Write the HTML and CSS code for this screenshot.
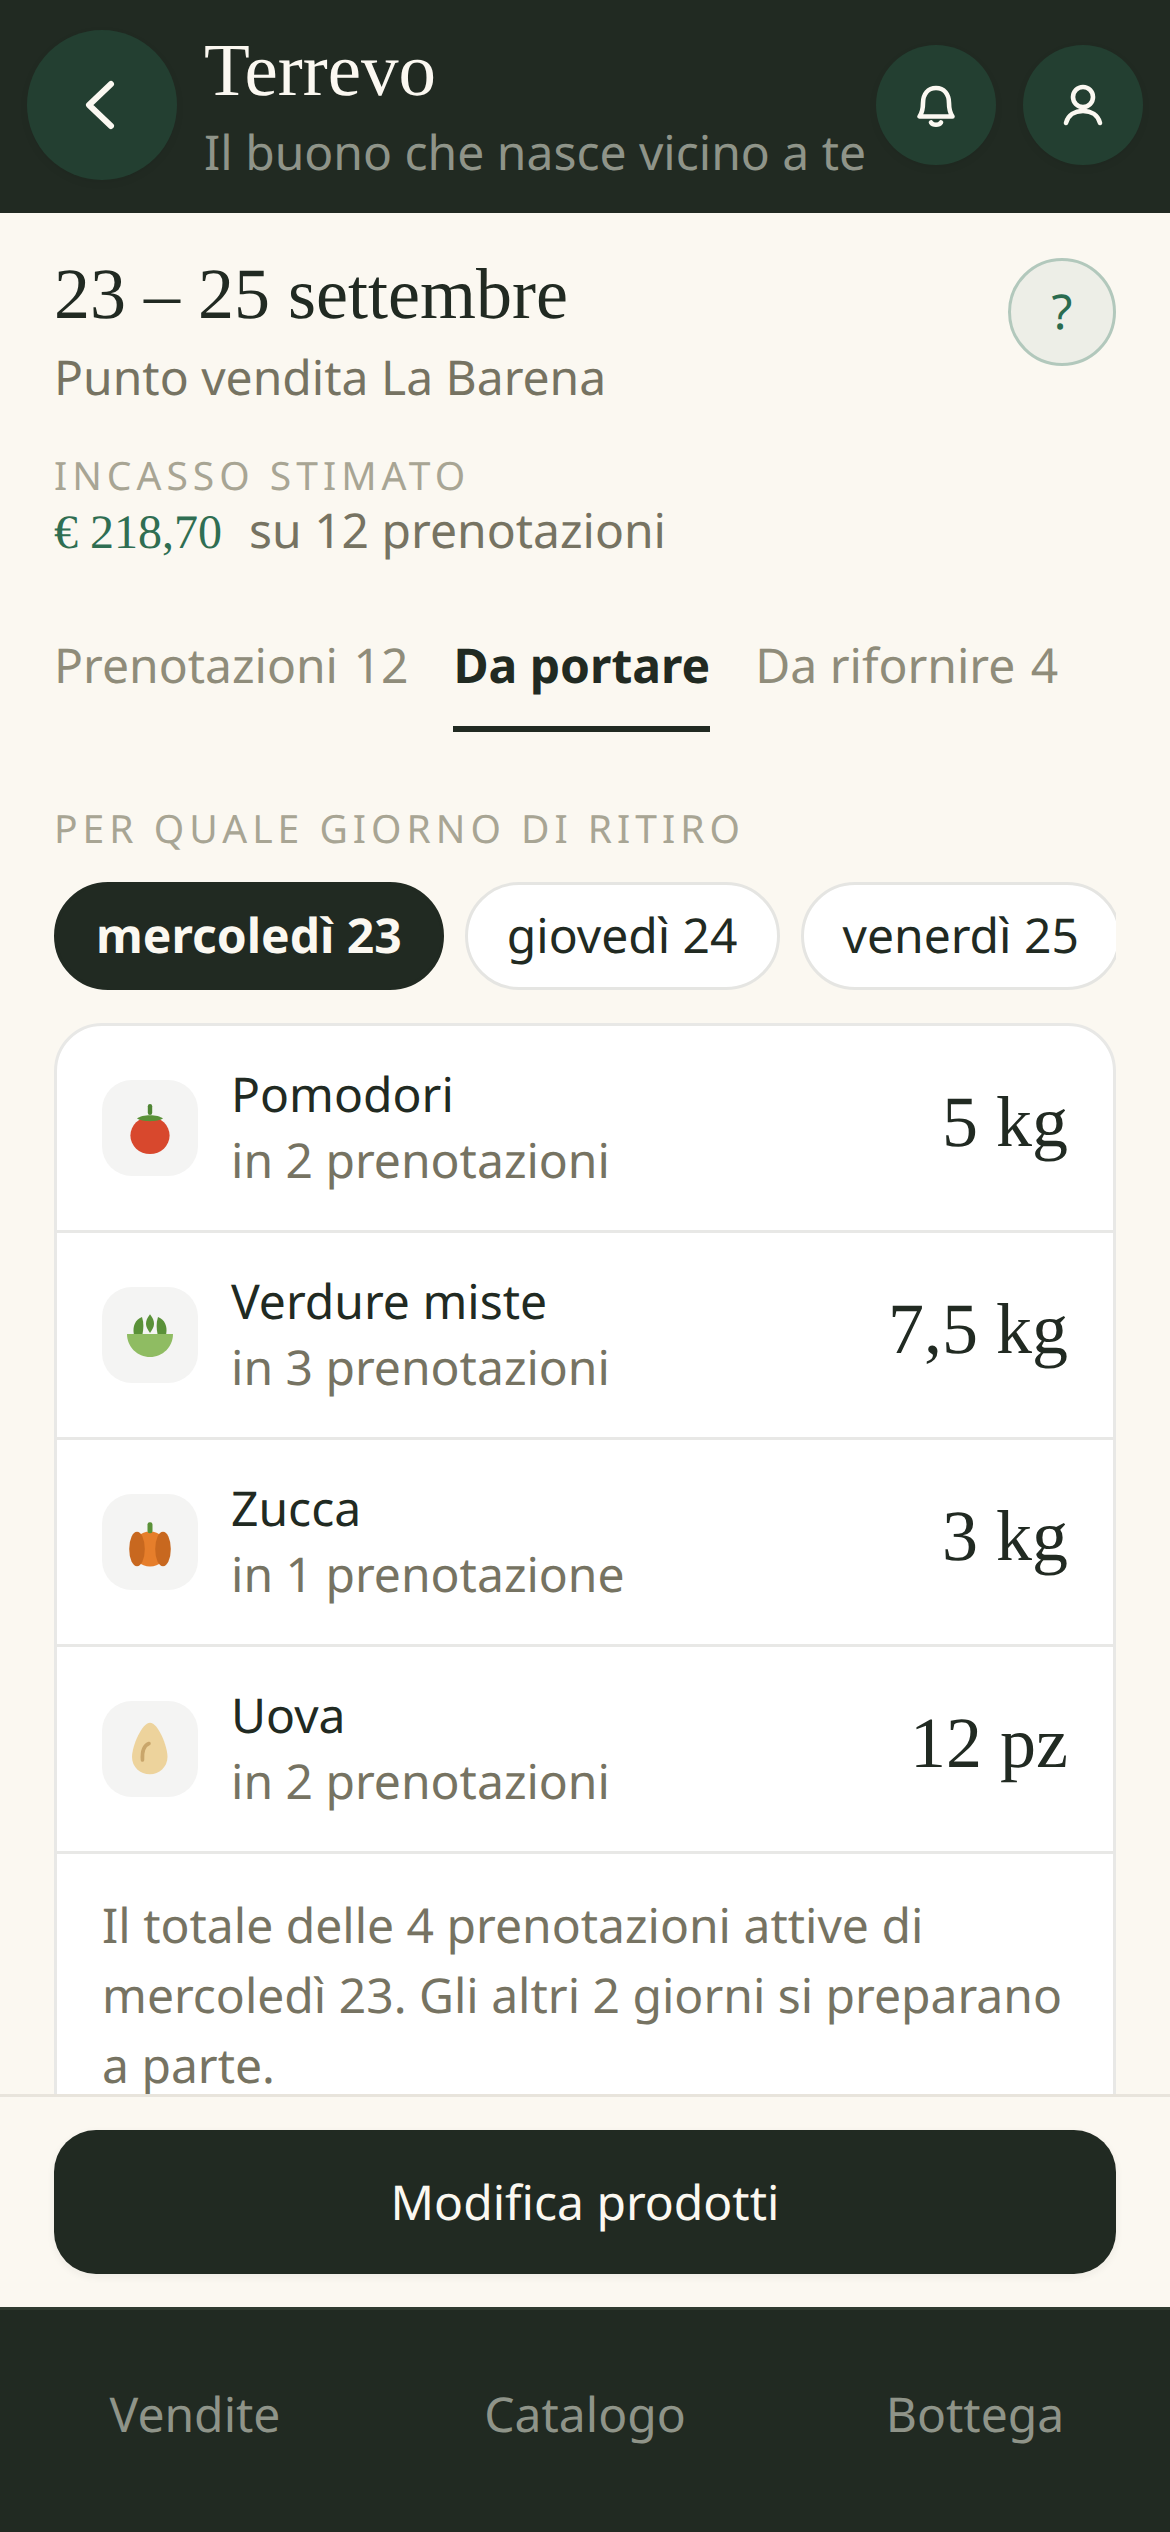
FILE: index.html
```html
<!DOCTYPE html>
<html lang="it">
<head>
<meta charset="utf-8">
<title>Terrevo</title>
<link rel="stylesheet" href="styles.css">
</head>
<body>
<div class="app">
  <header class="topbar">
    <button class="round round-back" aria-label="Indietro">
      <svg viewBox="0 0 150 150" class="fill-svg"><path d="M84 54 L62 75 L84 96" class="ico-stroke ico-thick"/></svg>
    </button>
    <div class="brand">
      <div class="brand-name">Terrevo</div>
      <div class="brand-tag">Il buono che nasce vicino a te</div>
    </div>
    <div class="top-actions">
      <button class="round round-small" aria-label="Notifiche">
        <svg viewBox="0 0 120 120" class="fill-svg"><path d="M43.5 71.5 H76.5 C74 68 73 64 73 58 C73 49 68 43 60 43 C52 43 47 49 47 58 C47 64 46 68 43.5 71.5 Z" class="ico-stroke"/><path d="M55 77.5 C57 80.5 63 80.5 65 77.5" class="ico-stroke"/></svg>
      </button>
      <button class="round round-small" aria-label="Profilo">
        <svg viewBox="0 0 120 120" class="fill-svg"><circle cx="60" cy="52" r="10" class="ico-stroke"/><path d="M43 78 C45 70 52 66 60 66 C68 66 75 70 77 78" class="ico-stroke"/></svg>
      </button>
    </div>
  </header>

  <main class="content">
    <section class="hero">
      <div class="hero-text">
        <h1 class="hero-title">23 – 25 settembre</h1>
        <p class="hero-sub">Punto vendita La Barena</p>
      </div>
      <button class="help">?</button>
    </section>

    <section class="income">
      <div class="eyebrow">INCASSO STIMATO</div>
      <div class="income-line"><span class="income-value">€ 218,70</span><span class="income-note">su 12 prenotazioni</span></div>
    </section>

    <nav class="tabs">
      <a class="tab">Prenotazioni <span class="tab-count">12</span></a>
      <a class="tab tab-active">Da portare</a>
      <a class="tab">Da rifornire <span class="tab-count">4</span></a>
    </nav>

    <div class="eyebrow eyebrow-days">PER QUALE GIORNO DI RITIRO</div>
    <div class="chips">
      <span class="chip chip-active">mercoledì 23</span>
      <span class="chip">giovedì 24</span>
      <span class="chip">venerdì 25</span>
    </div>

    <section class="card">
      <div class="row">
        <div class="thumb">
          <svg viewBox="0 0 96 96" class="fill-svg">
            <ellipse cx="48" cy="55.5" rx="19.6" ry="18.6" fill="#d8482d"/>
            <path d="M35 38.5 C40 34 56 34 61 38.5 C56 42 40 42 35 38.5 Z" fill="#5a9138"/>
            <rect x="45.8" y="24" width="4.4" height="11" rx="2.2" fill="#4f8534"/>
          </svg>
        </div>
        <div class="row-text"><div class="row-name">Pomodori</div><div class="row-sub">in 2 prenotazioni</div></div>
        <div class="row-qty">5 kg</div>
      </div>
      <div class="row">
        <div class="thumb">
          <svg viewBox="0 0 96 96" class="fill-svg">
            <path d="M31.8 47 C30.5 39 33 33 40 30 C42 36 41.5 42 40.5 47 Z" fill="#5a9138"/>
            <path d="M48 27.3 C51 31 52 34 52 37 C52 40 50 43 48 46 C46 43 44 40 44 37 C44 34 45 31 48 27.3 Z" fill="#5a9138"/>
            <path d="M64.2 47 C65.5 39 63 33 56 30 C54 36 54.5 42 55.5 47 Z" fill="#5a9138"/>
            <path d="M25 47 H71 C71 60 60.5 70 48 70 C35.5 70 25 60 25 47 Z" fill="#8fbc62"/>
          </svg>
        </div>
        <div class="row-text"><div class="row-name">Verdure miste</div><div class="row-sub">in 3 prenotazioni</div></div>
        <div class="row-qty">7,5 kg</div>
      </div>
      <div class="row">
        <div class="thumb">
          <svg viewBox="0 0 96 96" class="fill-svg">
            <ellipse cx="48" cy="55" rx="17" ry="17.6" fill="#e67e2b"/>
            <ellipse cx="35" cy="55" rx="7.8" ry="17.2" fill="#c8681f"/>
            <ellipse cx="61" cy="55" rx="7.8" ry="17.2" fill="#c8681f"/>
            <rect x="45.5" y="28.3" width="5" height="11" rx="2.2" fill="#5a9138"/>
          </svg>
        </div>
        <div class="row-text"><div class="row-name">Zucca</div><div class="row-sub">in 1 prenotazione</div></div>
        <div class="row-qty">3 kg</div>
      </div>
      <div class="row">
        <div class="thumb">
          <svg viewBox="0 0 96 96" class="fill-svg">
            <path d="M48 21.7 C56 21.7 65.5 45 65.5 56 C65.5 66 57 73.3 48 73.3 C38 73.3 30 66 30 56 C30 45 40 21.7 48 21.7 Z" fill="#edd39c"/>
            <path d="M47 42.5 C42 44.5 39.8 50 40.5 59" fill="none" stroke="#c9a66b" stroke-width="3.6" stroke-linecap="round"/>
          </svg>
        </div>
        <div class="row-text"><div class="row-name">Uova</div><div class="row-sub">in 2 prenotazioni</div></div>
        <div class="row-qty">12 pz</div>
      </div>
      <p class="card-note">Il totale delle 4 prenotazioni attive di mercoledì 23. Gli altri 2 giorni si preparano a parte.</p>
    </section>
  </main>

  <div class="action-bar">
    <button class="primary">Modifica prodotti</button>
  </div>

  <footer class="bottom-nav">
    <a class="nav-item">Vendite</a>
    <a class="nav-item">Catalogo</a>
    <a class="nav-item">Bottega</a>
  </footer>
</div>
</body>
</html>
```
FILE: styles.css
```css
* { box-sizing: border-box; }
html, body { margin: 0; padding: 0; }
body {
  width: 1170px;
  height: 2532px;
  overflow: hidden;
  background: #fbf8f1;
  font-family: "Noto Sans", sans-serif;
  color: #212a22;
  text-rendering: geometricPrecision;
}
button { font-family: inherit; border: 0; padding: 0; margin: 0; text-rendering: geometricPrecision; }
p, h1 { margin: 0; }

.app { display: flex; flex-direction: column; height: 2532px; }

.topbar {
  flex: none;
  height: 213px;
  background: #212a22;
  display: flex;
  align-items: flex-start;
  padding: 30px 27px 0;
  gap: 27px;
}
.round { background: #233f31; border-radius: 50%; display: block; flex: none; box-shadow: 0 3px 9px rgba(0,0,0,.06); }
.round-back { width: 150px; height: 150px; }
.round-small { width: 120px; height: 120px; }
.fill-svg { display: block; width: 100%; height: 100%; }
.ico-stroke { fill: none; stroke: #fbf8f1; stroke-width: 4.6; stroke-linecap: round; stroke-linejoin: round; }
.ico-thick { stroke-width: 6; }

.brand { flex: 1; min-width: 0; margin-top: -1px; white-space: nowrap; }
.brand-name { font-family: "Liberation Serif", serif; font-size: 75px; line-height: 84px; color: #fbf8f1; }
.brand-tag { font-size: 48px; line-height: 66px; color: #8f9489; margin-top: 7px; }
.top-actions { display: flex; gap: 27px; margin-top: 15px; flex: none; }

.content { flex: 1; min-height: 0; overflow: hidden; padding: 0 54px; }

.hero { display: flex; justify-content: space-between; align-items: flex-start; padding-top: 38px; }
.hero-title { font-family: "Liberation Serif", serif; font-weight: 400; font-size: 72px; line-height: 86px; color: #212a22; }
.hero-sub { font-size: 48px; line-height: 66px; color: #767362; margin-top: 8px; }
.help {
  width: 108px; height: 108px; border-radius: 50%;
  background: #edeee7; border: 3px solid #b2c8bc;
  color: #2a6b4f; font-size: 48px; line-height: 1;
  margin-top: 7px; flex: none;
}

.income { margin-top: 43px; }
.eyebrow { font-size: 39px; line-height: 44px; letter-spacing: 5px; color: #a8a594; }
.income-line { display: flex; align-items: baseline; gap: 27px; line-height: 66px; }
.income-value { font-family: "Liberation Serif", serif; font-size: 48px; color: #2f6e52; }
.income-note { font-size: 48px; color: #767362; }

.tabs { display: flex; gap: 45px; margin-top: 67px; }
.tab { font-size: 48px; line-height: 66px; color: #8f8c7a; padding-bottom: 27px; border-bottom: 6px solid transparent; white-space: nowrap; }
.tab-count { margin-left: 3px; }
.tab-active { color: #212a22; font-weight: 700; border-bottom-color: #212a22; }

.eyebrow-days { margin-top: 75px; }

.chips { display: flex; gap: 21px; margin-top: 31px; overflow: hidden; }
.chip {
  flex: none; height: 108px; line-height: 102px; padding: 0 39px;
  border: 3px solid #e5e5e2; border-radius: 54px; background: #fff;
  font-size: 48px; color: #212a22; white-space: nowrap;
}
.chip-active { background: #212a22; border-color: #212a22; color: #fbf8f1; font-weight: 700; }

.card { margin-top: 33px; background: #fff; border: 3px solid #e8e8e6; border-radius: 48px; }
.row {
  display: flex; align-items: center; gap: 33px;
  height: 207px; padding: 0 45px;
  border-bottom: 3px solid #e8e8e6;
}
.thumb { width: 96px; height: 96px; border-radius: 30px; background: #f4f4f3; flex: none; }
.row-text { flex: 1; min-width: 0; }
.row-name { font-size: 48px; line-height: 66px; color: #212a22; }
.row-sub { font-size: 48px; line-height: 66px; color: #767362; }
.row-qty { font-family: "Liberation Serif", serif; font-size: 72px; line-height: 84px; color: #212a22; white-space: nowrap; margin-top: -12px; }
.card-note { padding: 37px 45px; font-size: 48px; line-height: 70px; color: #767362; }

.action-bar {
  flex: none; height: 213px; background: #fbf8f1;
  border-top: 3px solid #e8e4dc;
  padding: 33px 54px 0;
}
.primary {
  display: block; width: 100%; height: 144px; border-radius: 42px;
  background: #212a22; color: #fbf8f1; font-size: 48px;
  box-shadow: 0 3px 9px rgba(33,42,34,.06);
}

.bottom-nav {
  flex: none; height: 225px; background: #212a22;
  border-top: 3px solid #2f3a30;
  display: grid; grid-template-columns: repeat(3, 1fr);
  align-items: center; justify-items: center;
  padding-bottom: 13px;
}
.nav-item { font-size: 48px; line-height: 66px; color: #8f9489; }
```
